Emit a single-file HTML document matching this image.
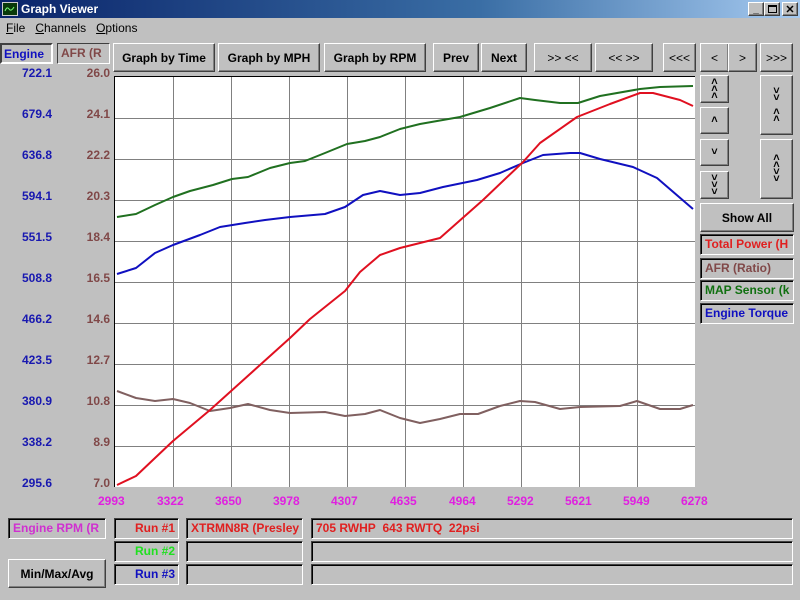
<!DOCTYPE html>
<html><head><meta charset="utf-8"><style>
*{margin:0;padding:0;box-sizing:border-box}
body{width:800px;height:600px;background:#c0c0c0;font:bold 12px "Liberation Sans",sans-serif;position:relative;overflow:hidden}
.a{position:absolute}
.btn{position:absolute;background:#c0c0c0;border:1px solid;border-color:#fff #404040 #404040 #fff;box-shadow:inset -1px -1px #808080;display:flex;align-items:center;justify-content:center;color:#000;font-size:12px}
.sunk{position:absolute;border:1px solid;border-color:#404040 #fff #fff #404040;box-shadow:inset 1px 1px #000;background:#c0c0c0;padding:2px 0 0 4px;white-space:nowrap;overflow:hidden}
.lab{position:absolute;text-align:right;width:50px}
.xl{position:absolute;color:#e020e0;top:494px}
.arr{font-size:11px;line-height:7px;text-align:center;flex-direction:column}
</style></head><body>
<div class="a" style="left:0;top:0;width:800px;height:18px;background:linear-gradient(90deg,#0a246a,#3a6ea5 60%,#a6caf0)"></div>
<div class="a" style="left:2px;top:2px;width:16px;height:14px;background:#0a3a0a;border:1px solid #ccc"><svg width="14" height="12"><path d="M2 8 Q4 3 6 6 T11 4" stroke="#7f7" fill="none"/></svg></div>
<div class="a" style="left:21px;top:2px;color:#fff;font-size:12px">Graph Viewer</div>
<div class="btn" style="left:748px;top:2px;width:16px;height:14px;font-size:10px">_</div>
<div class="btn" style="left:764px;top:2px;width:16px;height:14px"><div style="width:9px;height:8px;border:1px solid #000;border-top-width:2px"></div></div>
<div class="btn" style="left:782px;top:2px;width:16px;height:14px;font-size:11px">✕</div>
<div class="a" style="left:6px;top:21px;font-weight:normal"><u>F</u>ile&nbsp;&nbsp;&nbsp;<u>C</u>hannels&nbsp;&nbsp;&nbsp;<u>O</u>ptions</div>
<div class="a" style="left:0;top:43px;width:53px;height:21px;border:2px solid;border-color:#404040 #fff #fff #404040;color:#1010c0;padding:2px 0 0 2px">Engine</div>
<div class="a" style="left:57px;top:43px;width:53px;height:21px;border:1px solid;border-color:#404040 #fff #fff #404040;color:#804848;padding:2px 0 0 3px">AFR (R</div>
<div class="btn" style="left:113px;top:43px;width:102px;height:29px">Graph by Time</div>
<div class="btn" style="left:218px;top:43px;width:102px;height:29px">Graph by MPH</div>
<div class="btn" style="left:324px;top:43px;width:102px;height:29px">Graph by RPM</div>
<div class="btn" style="left:433px;top:43px;width:46px;height:29px">Prev</div>
<div class="btn" style="left:481px;top:43px;width:46px;height:29px">Next</div>
<div class="btn" style="left:534px;top:43px;width:58px;height:29px;font-weight:normal">&gt;&gt; &lt;&lt;</div>
<div class="btn" style="left:595px;top:43px;width:58px;height:29px;font-weight:normal">&lt;&lt; &gt;&gt;</div>
<div class="btn" style="left:663px;top:43px;width:33px;height:29px;font-weight:normal">&lt;&lt;&lt;</div>
<div class="btn" style="left:700px;top:43px;width:29px;height:29px;font-weight:normal">&lt;</div>
<div class="btn" style="left:728px;top:43px;width:29px;height:29px;font-weight:normal">&gt;</div>
<div class="btn" style="left:760px;top:43px;width:33px;height:29px;font-weight:normal">&gt;&gt;&gt;</div>
<div class="btn arr" style="left:700px;top:75px;width:29px;height:28px">˄<br>˄<br>˄</div>
<div class="btn arr" style="left:700px;top:107px;width:29px;height:27px">˄</div>
<div class="btn arr" style="left:700px;top:139px;width:29px;height:27px">˅</div>
<div class="btn arr" style="left:700px;top:171px;width:29px;height:28px">˅<br>˅<br>˅</div>
<div class="btn arr" style="left:760px;top:75px;width:33px;height:60px">˅<br>˅<br><br>˄<br>˄</div>
<div class="btn arr" style="left:760px;top:139px;width:33px;height:60px">˄<br>˄<br>˅<br>˅</div>
<div class="btn" style="left:700px;top:203px;width:94px;height:29px">Show All</div>
<div class="sunk" style="left:700px;top:234px;width:94px;height:21px;color:#e02020">Total Power (H</div>
<div class="sunk" style="left:700px;top:258px;width:94px;height:21px;color:#804848">AFR (Ratio)</div>
<div class="sunk" style="left:700px;top:280px;width:94px;height:21px;color:#107010">MAP Sensor (k</div>
<div class="sunk" style="left:700px;top:303px;width:94px;height:21px;color:#1010c0">Engine Torque</div>

<div class="a" style="left:2px;top:66px;color:#1818b0;line-height:14px">
<div class="lab" style="top:0">722.1</div><div class="lab" style="top:41px">679.4</div><div class="lab" style="top:82px">636.8</div><div class="lab" style="top:123px">594.1</div><div class="lab" style="top:164px">551.5</div><div class="lab" style="top:205px">508.8</div><div class="lab" style="top:246px">466.2</div><div class="lab" style="top:287px">423.5</div><div class="lab" style="top:328px">380.9</div><div class="lab" style="top:369px">338.2</div><div class="lab" style="top:410px">295.6</div></div>
<div class="a" style="left:60px;top:66px;color:#804848;line-height:14px">
<div class="lab" style="top:0">26.0</div><div class="lab" style="top:41px">24.1</div><div class="lab" style="top:82px">22.2</div><div class="lab" style="top:123px">20.3</div><div class="lab" style="top:164px">18.4</div><div class="lab" style="top:205px">16.5</div><div class="lab" style="top:246px">14.6</div><div class="lab" style="top:287px">12.7</div><div class="lab" style="top:328px">10.8</div><div class="lab" style="top:369px">8.9</div><div class="lab" style="top:410px">7.0</div></div>

<svg class="a" style="left:0;top:0" width="800" height="600">
<rect x="114" y="76" width="581" height="411" fill="#fff"/>
<path d="M114 76.5H695M114.5 76V487" stroke="#000" stroke-width="1"/>
<g stroke="#808080" stroke-width="1">
<path d="M173.5 77V487M231.5 77V487M289.5 77V487M347.5 77V487M405.5 77V487M463.5 77V487M521.5 77V487M579.5 77V487M637.5 77V487"/>
<path d="M115 118.5H695M115 159.5H695M115 200.5H695M115 241.5H695M115 282.5H695M115 323.5H695M115 364.5H695M115 405.5H695M115 446.5H695"/>
</g>
<g fill="none" stroke-width="2" stroke-linejoin="round">
<polyline stroke="#806060" points="117,391 136,398 155,401 173,399 190,403 210,411 230,408 248,404 270,410 290,413 325,412 345,416 365,414 380,410 400,418 420,423 440,419 460,414 478,414 500,406 520,401 535,402 560,409 580,407 620,406 637,401 660,409 680,409 693,405"/>
<polyline stroke="#207020" points="117,217 136,214 155,205 173,197 190,191 213,185 232,179 248,177 270,168 290,163 305,161 325,153 347,144 365,141 380,137 400,129 420,124 460,117 490,108 520,98 535,100 560,103 578,103 600,96 640,89 660,87 693,86"/>
<polyline stroke="#1010c0" points="117,274 136,268 155,253 173,245 200,235 220,227 245,223 265,220 290,217 325,214 345,207 363,195 380,191 400,195 420,193 443,187 477,180 500,173 523,163 543,155 570,153 580,153 600,159 633,167 657,178 693,209"/>
<polyline stroke="#e01020" points="117,485 136,476 155,458 173,441 210,410 230,392 260,365 290,338 310,319 345,291 360,272 380,255 400,248 440,238 483,200 523,162 540,143 577,117 610,104 640,93 653,93 680,100 693,106"/>
</g>
</svg>
<div class="xl" style="left:98px">2993</div><div class="xl" style="left:157px">3322</div><div class="xl" style="left:215px">3650</div><div class="xl" style="left:273px">3978</div><div class="xl" style="left:331px">4307</div><div class="xl" style="left:390px">4635</div><div class="xl" style="left:449px">4964</div><div class="xl" style="left:507px">5292</div><div class="xl" style="left:565px">5621</div><div class="xl" style="left:623px">5949</div><div class="xl" style="left:681px">6278</div>

<div class="sunk" style="left:8px;top:518px;width:98px;height:21px;color:#d030d0">Engine RPM (R</div>
<div class="btn" style="left:8px;top:559px;width:98px;height:29px">Min/Max/Avg</div>
<div class="sunk" style="left:114px;top:518px;width:65px;height:21px;color:#e02020;text-align:right;padding-right:3px">Run #1</div>
<div class="sunk" style="left:114px;top:541px;width:65px;height:21px;color:#20e020;text-align:right;padding-right:3px">Run #2</div>
<div class="sunk" style="left:114px;top:564px;width:65px;height:21px;color:#1010c0;text-align:right;padding-right:3px">Run #3</div>
<div class="sunk" style="left:186px;top:518px;width:117px;height:21px;color:#e02020">XTRMN8R (Presley</div>
<div class="sunk" style="left:186px;top:541px;width:117px;height:21px"></div>
<div class="sunk" style="left:186px;top:564px;width:117px;height:21px"></div>
<div class="sunk" style="left:311px;top:518px;width:482px;height:21px;color:#e02020">705 RWHP&nbsp; 643 RWTQ&nbsp; 22psi</div>
<div class="sunk" style="left:311px;top:541px;width:482px;height:21px"></div>
<div class="sunk" style="left:311px;top:564px;width:482px;height:21px"></div>
</body></html>
